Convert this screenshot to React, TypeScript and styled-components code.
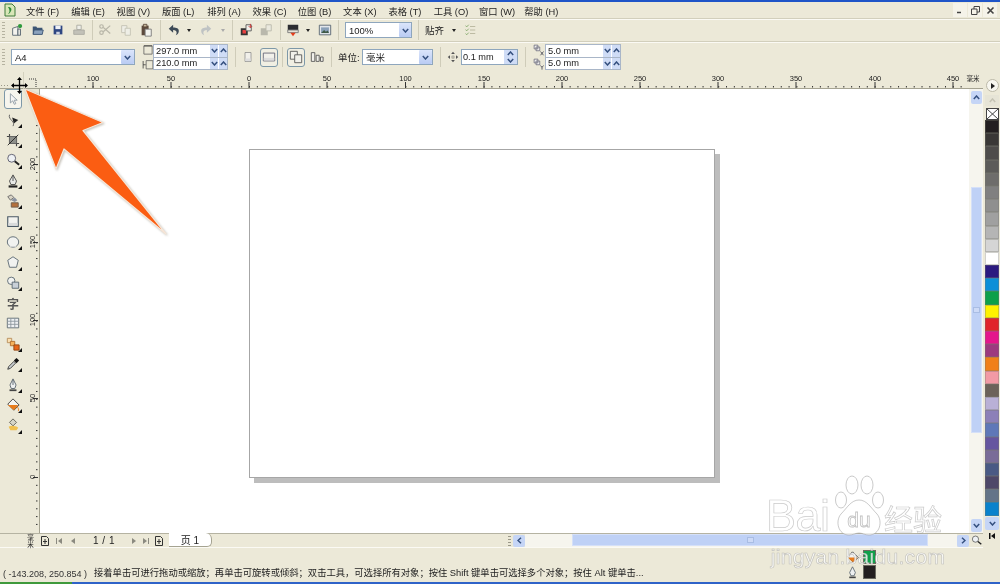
import React from "react";
import styled, { createGlobalStyle } from "styled-components";

const Global = createGlobalStyle`
  html, body { margin: 0; padding: 0; background: #ece9d8; }
  #root { width: 1000px; height: 584px; overflow: hidden; }
  * { box-sizing: border-box; }
`;

const FONT = `"Liberation Sans", "Noto Sans CJK SC", sans-serif`;
const FACE = "#ece9d8";

const Frame = styled.div`
  position: relative;
  width: 1000px;
  height: 584px;
  display: flex;
  flex-direction: column;
  background: ${FACE};
  font-family: ${FONT};
  font-size: 9.5px;
  color: #222;
  overflow: hidden;
  filter: blur(0.3px);
`;
const TopStrip = styled.div`height: 2px; background: #1f55c8; flex: none;`;
const MenuBar = styled.div`
  height: 17px; flex: none; display: flex; align-items: center; padding-left: 3px;
  border-bottom: 1px solid #d2cfbc; box-shadow: 0 1px 0 #fbfaf4;
`;
const AppIcon = styled.svg`width: 14px; height: 14px; margin-right: 9px; flex: none;`;
const MenuItem = styled.span`width: 45.3px; flex: none; white-space: nowrap; font-size: 9.3px; padding-top: 1px;`;
const WindowButtons = styled.div`margin-left: auto; display: flex; gap: 1px; padding-right: 3px;`;
const WindowButton = styled.span`
  width: 14px; height: 14px; background: #f5f3e9; display: flex; align-items: center; justify-content: center;
`;
const Bar = styled.div<{ $h: number; $line?: boolean }>`
  height: ${p => p.$h}px; flex: none; display: flex; align-items: center;
  ${p => p.$line ? "border-bottom: 1px solid #d2cfbc; box-shadow: 0 1px 0 #fbfaf4;" : ""}
`;
const Handle = styled.div`
  width: 3px; height: 16px; margin: 0 2px 0 2px; flex: none;
  background: repeating-linear-gradient(to bottom, #b5b2a0 0 1px, transparent 1px 3px);
`;
const Slot = styled.div<{ $w: number; $ml?: number }>`
  width: ${p => p.$w}px; margin-left: ${p => p.$ml ?? 0}px; height: 18px; flex: none;
  display: flex; align-items: center; justify-content: center;
`;
const ActiveSlot = styled(Slot)`
  height: 19px; border: 1.5px solid #7d98a8; border-radius: 3px; background: #f1efe3;
`;
const Sep = styled.div<{ $w: number }>`
  width: ${p => p.$w}px; height: 20px; flex: none; display: flex; justify-content: center;
  &::before { content: ""; width: 1px; height: 100%; background: #cfccb9; }
`;
const Caret = styled.div<{ $dim?: boolean }>`
  width: 0; height: 0; border-left: 2.5px solid transparent; border-right: 2.5px solid transparent;
  border-top: 3px solid ${p => p.$dim ? "#aaa" : "#222"};
`;
const Label = styled.span<{ $w: number; $ml?: number }>`
  width: ${p => p.$w}px; margin-left: ${p => p.$ml ?? 0}px; flex: none; white-space: nowrap; font-size: 9.5px;
`;
const SelectBox = styled.div<{ $w: number; $ml?: number }>`
  width: ${p => p.$w}px; height: 16px; margin-left: ${p => p.$ml ?? 0}px; flex: none;
  display: flex; align-items: center; background: #fff; border: 1px solid #8ea6bd;
  padding-left: 3px; font-size: 9.5px; position: relative;
`;
const Chevron = styled.span<{ $size?: number }>`
  display: flex; align-items: center; justify-content: center;
  width: ${p => p.$size ?? 12}px; height: 100%; margin-left: auto; flex: none;
  background: linear-gradient(#dbe5fb, #b9cbf3); border-radius: 1px;
`;
const SpinPair = styled.div<{ $w: number; $ml?: number }>`
  width: ${p => p.$w}px; margin-left: ${p => p.$ml ?? 0}px; height: 26px; flex: none;
  display: flex; flex-direction: column; border: 1px solid #a9b6c8; background: #fff;
`;
const SpinRow = styled.div`
  flex: 1; min-height: 0; display: flex; align-items: center; padding-left: 2px; font-size: 9.3px;
  & + & { border-top: 1px solid #a9b6c8; }
`;
const SpinButton = styled.span<{ $first?: boolean }>`
  width: 9px; height: 100%; flex: none; display: flex; align-items: center; justify-content: center;
  background: #cfdcf6; border-left: 1px solid #fff; margin-left: ${p => p.$first ? "auto" : "0"};
`;
const StackedIcons = styled.div<{ $w: number; $ml?: number }>`
  width: ${p => p.$w}px; margin-left: ${p => p.$ml ?? 0}px; flex: none; height: 26px;
  display: flex; flex-direction: column; align-items: center; justify-content: space-between;
`;
const SingleSpin = styled(SelectBox)`padding-left: 1px; font-size: 9.2px;`;
const VStackButton = styled.span`
  width: 13px; height: 100%; margin-left: auto; flex: none; display: flex; flex-direction: column;
  align-items: center; justify-content: space-evenly; background: #cfdcf6;
`;

const Workspace = styled.div`height: 475px; flex: none; display: flex;`;
const CenterColumn = styled.div`flex: none; width: 983px; display: flex; flex-direction: column;`;
const RulerBar = styled.div`height: 17px; flex: none; display: flex;`;
const MiddleRow = styled.div`height: 444px; flex: none; display: flex;`;
const Toolbox = styled.div`
  width: 24px; flex: none; display: flex; flex-direction: column; padding: 0 0 0 4px; 
`;
const Tool = styled.div<{ $active?: boolean; $fly?: boolean }>`
  position: relative; width: 18px; height: 20.4px; flex: none; display: flex; align-items: center; justify-content: center;
  ${p => p.$active ? "border: 1.5px solid #7d98a8; border-radius: 3px; background: #f6f5ee;" : ""}
  ${p => p.$fly ? `&::after { content: ""; position: absolute; right: 0; bottom: 2px; width: 0; height: 0;
    border-left: 4px solid transparent; border-bottom: 4px solid #111; }` : ""}
`;
const VRuler = styled.svg`width: 15px; height: 444px; flex: none; display: block;`;
const HRuler = styled.svg`width: 983px; height: 17px; display: block;`;
const CanvasArea = styled.div`
  flex: 1; min-width: 0; background: #fff; padding: 60px 0 0 209px; border-left: 1px solid #a5a391; 
`;
const Page = styled.div`
  width: 466px; height: 329px; background: #fff; border: 1px solid #a6a6a6; box-shadow: 5px 5px 0 #bdbdbd;
`;
const VScroll = styled.div`
  width: 14px; flex: none; background: #f6f5ee; display: flex; flex-direction: column; align-items: center; padding: 2px 0 1px;
`;
const ScrollButton = styled.div<{ $end?: boolean }>`
  width: 11px; height: 13px; flex: none; background: #c5d5f6; border-radius: 2px; display: flex; align-items: center; justify-content: center;
  margin-top: ${p => p.$end ? "auto" : "0"};
`;
const VThumb = styled.div`
  width: 11px; height: 246px; margin-top: 83px; background: #bfd1f6; border: 1px solid #d5e0f8; flex: none;
  display: flex; align-items: center; justify-content: center;
`;
const ThumbGrip = styled.span`
  width: 7px; height: 6px; flex: none; border: 1px solid #a9bde4; background: #cddaf7;
`;
const BottomRow = styled.div`
  height: 14px; flex: none; display: flex; align-items: center; 
  box-shadow: 0 1px 0 #fbfaf4; border-top: 1px solid #b5b3a2;
`;
const UnitCorner = styled.span`
  margin-left: 23px; flex: none; font-size: 6.5px; line-height: 7px; text-align: center; width: 15px;
`;
const NavIcon = styled.span<{ $w: number; $mt?: number }>`
  width: ${p => p.$w}px; margin-top: ${p => p.$mt ?? 0}px; flex: none; display: flex; align-items: center; justify-content: center;
`;
const PageCount = styled.span`width: 48px; text-align: center; font-size: 10px; flex: none; letter-spacing: .5px;`;
const PageTab = styled.div`
  width: 43px; height: 14px; margin-top: -1px; margin-left: 3px; background: #fff; flex: none;
  border-right: 1px solid #a5a391; border-bottom: 1px solid #a5a391; border-radius: 0 6px 5px 0;
  display: flex; align-items: center; justify-content: center; font-size: 10px;
`;
const GripDots = styled.span`
  width: 3px; height: 10px; margin-left: 296px; margin-right: 2px; flex: none;
  background: repeating-linear-gradient(to bottom, #9a9888 0 1px, transparent 1px 3px);
`;
const HTrack = styled.div`
  width: 432px; height: 13px; flex: none; background: #f6f5ee; padding-left: 47px; display: flex;
`;
const HThumb = styled.div`
  width: 356px; height: 12px; background: #bfd1f6; border: 1px solid #d5e0f8; display: flex; align-items: center; justify-content: center;
`;
const SmallButton = styled(ScrollButton)`width: 12px; height: 12px;`;
const Palette = styled.div`
  width: 17px; flex: none; display: flex; flex-direction: column; align-items: center; padding-top: 7px; padding-left: 1px;
`;
const PaletteFlyout = styled.div`
  width: 13px; height: 13px; border-radius: 50%; background: #f7f6ef; border: 1px solid #bcb9a8; flex: none;
  display: flex; align-items: center; justify-content: center;
`;
const PaletteUp = styled.div`
  width: 14px; height: 11px; margin-top: 3px; margin-bottom: 2px; background: #e6e4d6; flex: none; display: flex; align-items: center; justify-content: center;
`;
const NoColor = styled.svg`width: 13px; height: 12px; flex: none; display: block;`;
const Swatch = styled.div<{ $c: string }>`
  width: 14px; height: 13.2px; flex: none; background: ${p => p.$c}; border: 1px solid rgba(120,120,110,.35);
`;
const PaletteDown = styled(ScrollButton)`width: 14px; margin-top: 1px;`;
const StatusBar = styled.div`
  height: 35px; flex: none; display: flex; align-items: flex-end; padding: 0 0 3px 3px;
`;
const Coordinates = styled.span`width: 91px; flex: none; font-size: 9px; white-space: nowrap; color: #333;`;
const Hint = styled.span`width: 750px; flex: none; white-space: nowrap; font-size: 9.3px;`;
const ColorIndicators = styled.div`
  display: grid; grid-template-columns: 13px 13px; column-gap: 4px; row-gap: 1px; align-items: center; margin-left: 2px;
`;
const ColorChip = styled.div<{ $c: string }>`width: 13px; height: 14px; background: ${p => p.$c}; border: 1px solid #6a6a60;`;
const BottomStrip = styled.div`
  height: 2px; flex: none; background: linear-gradient(to right, #3f9a3c 0 72px, #2f63c8 72px);
`;
const ArrowOverlay = styled.svg`
  position: absolute; left: 20px; top: 84px; width: 155px; height: 160px; pointer-events: none;
`;
const CursorOverlay = styled.svg`position: absolute; left: 11px; top: 77px; width: 17px; height: 17px;`;
const Watermark = styled.div`
  position: absolute; left: 766px; top: 474px; width: 184px; height: 108px; pointer-events: none;
  display: flex; flex-direction: column; align-items: center; color: rgba(255,255,255,.8); font-family: "Liberation Sans", sans-serif;
  -webkit-text-stroke: 0.7px rgba(150,150,150,.5);
`;
const WatermarkTop = styled.div`display: flex; align-items: flex-end; height: 68px; width: 100%;`;
const WatermarkBai = styled.span`font-size: 45px; line-height: 52px; width: 66px; flex: none; letter-spacing: -.5px;`;
const WatermarkPaw = styled.svg`width: 56px; height: 68px; flex: none; margin-left: -1px;`;
const WatermarkCn = styled.span`font-family: "Noto Sans CJK SC", sans-serif; font-size: 29px; line-height: 48px; margin-left: -3px; white-space: nowrap;`;
const WatermarkUrl = styled.span`font-size: 21px; line-height: 24px; margin-top: 3px; white-space: nowrap; letter-spacing: .3px;`;
const ToolText = styled.span`font-size: 12px; color: #555; font-weight: 700;`;

const Ic = ({ children, s = 14 }: { children: React.ReactNode; s?: number }) => (
  <svg width={s} height={s} viewBox="0 0 16 16">{children}</svg>
);
const Chev = ({ up = false, c = "#35507f" }: { up?: boolean; c?: string }) => (
  <svg width="7" height="5" viewBox="0 0 7 5">
    <path d={up ? "M.8 4 3.5 1 6.2 4" : "M.8 1 3.5 4 6.2 1"} fill="none" stroke={c} strokeWidth="1.5" />
  </svg>
);
const ChevSide = ({ right = false }: { right?: boolean }) => (
  <svg width="5" height="7" viewBox="0 0 5 7">
    <path d={right ? "M1 .8 4 3.5 1 6.2" : "M4 .8 1 3.5 4 6.2"} fill="none" stroke="#35507f" strokeWidth="1.5" />
  </svg>
);
const Tri = ({ d, c = "#8b8a80" }: { d: string; c?: string }) => (
  <svg width="10" height="8" viewBox="0 0 10 8"><path d={d} fill={c} /></svg>
);
const PageAdd = () => (
  <svg width="10" height="10" viewBox="0 0 10 10"><path d="M1.500 .5h5l2 2v7h-7zM5 3v5M3 5.500h4" fill="none" stroke="#333" /></svg>
);

const icons = {
  newDoc: <Ic><path d="M3 6 9 4v10H3z" fill="#f4f3ee" stroke="#56636e" /><path d="M9 7h3v7H9z" fill="#dfe0dc" stroke="#56636e" /><circle cx="11.5" cy="3.5" r="2.4" fill="#2d9a3c" /></Ic>,
  open: <Ic><path d="M2 4h4l1 1.5h6V13H2z" fill="#3d5674" /><path d="M3.5 8H14l-1.2 5H2.5z" fill="#8ba2bd" stroke="#3d5674" /></Ic>,
  save: <Ic><path d="M3 3h10v10H3z" fill="#2e4682" /><path d="M5 3h6v4H5z" fill="#eef0f5" /><path d="M6 10h4v3H6z" fill="#cfd5e2" /></Ic>,
  print: <Ic><path d="M5.5 2.5h5v5h-5z" fill="#eeeee8" stroke="#a9a9a0" /><path d="M2 8h12v5H2z" fill="#c2c1b8" stroke="#a9a9a0" /></Ic>,
  cut: <Ic><path d="M14 3 6 10M14 12 6 5" stroke="#b8b6a8" strokeWidth="1.4" fill="none" /><circle cx="4" cy="4" r="2" fill="none" stroke="#b8b6a8" strokeWidth="1.4" /><circle cx="4" cy="11" r="2" fill="none" stroke="#b8b6a8" strokeWidth="1.4" /></Ic>,
  copy: <Ic><path d="M3 3h6v8H3z" fill="#eeeee6" stroke="#c4c2b4" /><path d="M7 6h6v8H7z" fill="#eeeee6" stroke="#c4c2b4" /></Ic>,
  paste: <Ic><path d="M3 3h8v11H3z" fill="#5d4a3c" /><path d="M5 1.5h4v3H5z" fill="#c8b89c" stroke="#5d4a3c" /><path d="M7 7h7v8H7z" fill="#f3f3ee" stroke="#777" /></Ic>,
  undo: <Ic><path d="M7 2 2 6.5 7 11V8c2.5 0 4 1 4 3.2 0 1-.4 2-.9 2.8 2.3-1.2 3.4-3 3.4-5C13.5 6 11 5 7 5z" fill="#3d4a57" /></Ic>,
  redo: <Ic><path d="M9 2l5 4.5L9 11V8C6.5 8 5 9 5 11.2c0 1 .4 2 .9 2.8C3.600 12.800 2.500 11 2.500 9 2.500 6 5 5 9 5z" fill="#bfc3c4" /></Ic>,
  importIc: <Ic><path d="M2 6h8v8H2z" fill="#333" /><path d="M4 8h4v4H4z" fill="#e84040" /><path d="M8 2h6v7H8z" fill="#f0f0ea" stroke="#555" /><path d="M13 1v4M11 3.500l2 2 2-2" stroke="#c33" fill="none" /></Ic>,
  exportIc: <Ic><path d="M2 6h8v8H2z" fill="#b9b8ac" /><path d="M8 2h6v7H8z" fill="#e9e8de" stroke="#b9b8ac" /></Ic>,
  launcher: <Ic><path d="M2 2h12v6H2z" fill="#2c2c30" /><path d="M2 8h12v3H2z" fill="#e6e4d8" stroke="#777" /><path d="M5 11h6l-3 4z" fill="#e43e1c" /></Ic>,
  online: <Ic><path d="M1.500 2.500h13v11h-13z" fill="#e3e6ea" stroke="#55626e" /><path d="M3.500 5h9v6.500h-9z" fill="#8aa0b8" /><path d="M3.500 11.500 7 8l2 2 2-1.500 1.500 3z" fill="#3f5a46" /></Ic>,
  snap: <Ic><path d="M3 3l1.200 1.500L6.500 2M3 7.500l1.200 1.500L6.500 6.500M3 12l1.200 1.500L6.500 11" stroke="#82a86a" fill="none" /><path d="M8 4h6M8 8h6M8 12h6" stroke="#b6b39c" /></Ic>,
  pageH: <Ic s={12}><path d="M2.500 2.500h11v11h-11z" fill="none" stroke="#555" /><path d="M2.500 2.500h11" stroke="#333" strokeWidth="1" /></Ic>,
  pageV: <Ic s={12}><path d="M1.500 4v10M1.500 9H5" stroke="#333" /><path d="M5.500 3.500h9v11h-9z" fill="none" stroke="#555" /></Ic>,
  portrait: <Ic><path d="M4 2h8v12H4z" fill="#f1f0ea" stroke="#888" /><path d="M4.500 10h7v3.500h-7z" fill="#ddd" /></Ic>,
  landscape: <Ic><path d="M1.500 3.500h13v9h-13z" fill="#f1f0ea" stroke="#667" /><path d="M2 9h12v3H2z" fill="#ddd" /></Ic>,
  pagesAll: <Ic><path d="M1.500 1.500h8v9h-8z" fill="#f1f0ea" stroke="#555" /><path d="M6.500 5.500h8v9h-8z" fill="#f1f0ea" stroke="#555" /></Ic>,
  pagesCur: <Ic><path d="M1.500 3h4v10h-4z M7 6h3.500v7H7z M12 8h3v5h-3z" fill="#f1f0ea" stroke="#555" /></Ic>,
  nudge: <Ic><path d="M8 1 10.500 4h-5zM8 15l2.500-3h-5zM1 8l3-2.500v5zM15 8l-3-2.500v5z" fill="#555" /><circle cx="8" cy="8" r="2.500" fill="#b8b6a8" /></Ic>,
  dupX: <Ic s={12}><path d="M1.500 1.500h5v5h-5zM4 4h5v5H4z" fill="#eee" stroke="#667" /><path d="M10 10l4 5M14 10l-4 5" stroke="#334" /></Ic>,
  dupY: <Ic s={12}><path d="M1.500 1.500h5v5h-5zM4 4h5v5H4z" fill="#eee" stroke="#667" /><path d="M10 10l2 2.500 2-2.500M12 12.500V15.500" stroke="#334" fill="none" /></Ic>,
  pick: <Ic><path d="M5 2v10.500l2.700-2.400 1.800 4 1.700-.8-1.800-3.900h3.400z" fill="#f5f5f5" stroke="#8d99a2" /></Ic>,
  shape: <Ic><path d="M4 2c-1 3 1 5 3 7s2 4 1 6" fill="none" stroke="#555" /><path d="M7 5l7 3-5 4z" fill="#222" /></Ic>,
  crop: <Ic><path d="M4 1v11h11M1 4h11v11" fill="none" stroke="#444" strokeWidth="1.300" /><path d="M4 4h8v8H4z" fill="#8d8f8a" /><path d="M2 14 14 2" stroke="#222" /></Ic>,
  zoom: <Ic><circle cx="6.500" cy="6" r="4.500" fill="#eef1f4" stroke="#556" /><path d="M10 9.500l5 4" stroke="#222" strokeWidth="2.200" /></Ic>,
  pen: <Ic><path d="M8 1 12 8l-1.500 4h-5L4 8z" fill="#e8e9e6" stroke="#444" /><path d="M8 2v6" stroke="#444" /><path d="M3 13h10v2.500H3z" fill="#222" /></Ic>,
  smart: <Ic><path d="M2 3l4-2 3 3-4 3z" fill="#d9d4c6" stroke="#666" /><path d="M6 7l4-3 3 3-3 2z" fill="#8a92a0" /><path d="M6 10h8v5H6z" fill="#b4703c" stroke="#6a5a4c" /></Ic>,
  rect: <Ic><path d="M2 2h12v11H2z" fill="#f3f3ef" stroke="#4b5a66" strokeWidth="1.300" /><path d="M2.700 9h10.600v3.300H2.700z" fill="#d9dbdb" /></Ic>,
  ellipse: <Ic><ellipse cx="8" cy="8" rx="6.500" ry="6" fill="#f1f2f0" stroke="#56646e" /><path d="M3 11c3 2.500 7 2.500 10 0l-2 3H5z" fill="#d6d8d8" /></Ic>,
  polygon: <Ic><path d="M8 2l6 4-2 8H4L2 6z" fill="#f1f2f0" stroke="#56646e" /></Ic>,
  basic: <Ic><circle cx="6" cy="5.500" r="4.200" fill="#f1f2f0" stroke="#56646e" /><path d="M7 7h7.500v7H7z" fill="#c9d0d8" stroke="#56646e" /></Ic>,
  table: <Ic><path d="M1.500 2.500h13v11h-13z" fill="#eef0f2" stroke="#5c6870" /><path d="M1.500 6h13M1.500 9.500h13M5.500 2.500v11M10 2.500v11" stroke="#8d979e" fill="none" /></Ic>,
  blend: <Ic><path d="M1.500 1.500h5v5h-5z" fill="#fbe0b2" stroke="#b58c58" /><path d="M5 5h5v5H5z" fill="#f5b25c" stroke="#b06a28" /><path d="M9 9h6v6H9z" fill="#e8661a" stroke="#90420c" /></Ic>,
  dropper: <Ic><path d="M2 14l1-3 6-6 2 2-6 6z" fill="#c9ced0" stroke="#333" /><path d="M9 4l3-3 3 3-3 3z" fill="#111" /></Ic>,
  outline: <Ic><path d="M8 1l3.500 7L10 12H6L4.500 8z" fill="#eef0f0" stroke="#55606a" /><path d="M8 2v6" stroke="#55606a" /><path d="M4 13h8v2H4z" fill="#444" /></Ic>,
  fill: <Ic><path d="M8 1 15 8l-6 6-7-7z" fill="#f4f4f0" stroke="#333" /><path d="M2 8h12l-5 6z" fill="#e87c1c" /><path d="M13 10c1 2 2 3 1 5" stroke="#e87c1c" fill="none" /></Ic>,
  ifill: <Ic><path d="M8 1l4 4-4 4-4-4z" fill="#d6d5c8" stroke="#5c5c52" /><path d="M3 10c3-2 8-1 11 1l-2 3H5z" fill="#f0c050" /></Ic>,
};

const menuItems = ["文件 (F)", "编辑 (E)", "视图 (V)", "版面 (L)", "排列 (A)", "效果 (C)", "位图 (B)", "文本 (X)", "表格 (T)", "工具 (O)", "窗口 (W)", "帮助 (H)"];
const swatches = ["#231f20","#3a3836","#4e4c4a","#5c5b59","#6e6d6b","#808080","#8f8f8f","#a0a0a0","#b5b5b5","#d5d5d5","#ffffff","#2b1a80","#0b8fd8","#0ea04a","#fff200","#e0242a","#e4168c","#9c3a7f","#f08019","#f29aa5","#6c625a","#b9b0d6","#8c80b8","#5f78b8","#6656a0","#7a6c98","#4a5a84","#4e4868","#647488","#0a82cc"];
const tools: { k: keyof typeof icons; fly?: boolean; active?: boolean; text?: string }[] = [
  { k: "pick", active: true }, { k: "shape", fly: true }, { k: "crop", fly: true }, { k: "zoom", fly: true },
  { k: "pen", fly: true }, { k: "smart", fly: true }, { k: "rect", fly: true }, { k: "ellipse", fly: true },
  { k: "polygon", fly: true }, { k: "basic", fly: true }, { k: "pick", text: "字" }, { k: "table" },
  { k: "blend", fly: true }, { k: "dropper", fly: true }, { k: "outline", fly: true }, { k: "fill", fly: true }, { k: "ifill", fly: true },
];

const hLabels = [[93,"100"],[171,"50"],[249,"0"],[327,"50"],[405.5,"100"],[484,"150"],[562,"200"],[640,"250"],[718,"300"],[796,"350"],[875,"400"],[953,"450"]] as [number,string][];
const vLabels = [[164,"200"],[242,"150"],[320,"100"],[398,"50"],[477,"0"]] as [number,string][];
const STEP = 78.2 / 10;
const hDots = Array.from({ length: 125 }, (_, i) => 249 + (i - 28) * STEP).filter(x => x > 38 && x < 968);
const vDots = Array.from({ length: 60 }, (_, i) => 477 - (i - 8) * STEP).filter(y => y > 92 && y < 530);

export default function App() {
  return (
    <Frame>
      <Global />
      <TopStrip />
      <MenuBar>
        <AppIcon viewBox="0 0 14 14">
          <path d="M2 1h7l3 3v9H2z" fill="#d8e6b8" stroke="#3f7a3a" />
          <path d="M5 4c3 0 4 2 3 4s-2 3-3 3c2-2 2-4 0-7z" fill="#2f8a3a" />
        </AppIcon>
        {menuItems.map(m => <MenuItem key={m}>{m}</MenuItem>)}
        <WindowButtons>
          <WindowButton><svg width="8" height="8" viewBox="0 0 8 8"><path d="M1 6.500h4" stroke="#444" strokeWidth="1.500" /></svg></WindowButton>
          <WindowButton><svg width="9" height="9" viewBox="0 0 9 9"><path d="M.5 3h5.500v5.500H.5zM3 3V.5h5.500V6H6" fill="none" stroke="#444" /></svg></WindowButton>
          <WindowButton><svg width="9" height="9" viewBox="0 0 9 9"><path d="M1.500 1.500l6 6M7.500 1.500l-6 6" stroke="#444" strokeWidth="1.600" /></svg></WindowButton>
        </WindowButtons>
      </MenuBar>
      <Bar $h={23} $line>
        <Handle />
        <Slot $w={20.5}>{icons.newDoc}</Slot>
        <Slot $w={20.5}>{icons.open}</Slot>
        <Slot $w={20.5}>{icons.save}</Slot>
        <Slot $w={20.5}>{icons.print}</Slot>
        <Sep $w={6} />
        <Slot $w={20.5}>{icons.cut}</Slot>
        <Slot $w={20.5}>{icons.copy}</Slot>
        <Slot $w={20.5}>{icons.paste}</Slot>
        <Sep $w={7} />
        <Slot $w={20}>{icons.undo}</Slot>
        <Slot $w={10}><Caret /></Slot>
        <Slot $w={25}>{icons.redo}</Slot>
        <Slot $w={8}><Caret $dim /></Slot>
        <Sep $w={11} />
        <Slot $w={16}>{icons.importIc}</Slot>
        <Slot $w={25}>{icons.exportIc}</Slot>
        <Sep $w={4} />
        <Slot $w={21}>{icons.launcher}</Slot>
        <Slot $w={9}><Caret /></Slot>
        <Slot $w={25}>{icons.online}</Slot>
        <Sep $w={2} />
        <SelectBox $w={67} $ml={5.5}>100%<Chevron><Chev /></Chevron></SelectBox>
        <Sep $w={13} />
        <Label $w={22}>贴齐</Label>
        <Slot $w={14}><Caret /></Slot>
        <Slot $w={18}>{icons.snap}</Slot>
      </Bar>
      <Bar $h={30}>
        <Handle />
        <SelectBox $w={124} $ml={4}>A4<Chevron $size={13}><Chev /></Chevron></SelectBox>
        <StackedIcons $w={11} $ml={7}>{icons.pageH}{icons.pageV}</StackedIcons>
        <SpinPair $w={75}>
          <SpinRow>297.0 mm<SpinButton $first><Chev /></SpinButton><SpinButton><Chev up /></SpinButton></SpinRow>
          <SpinRow>210.0 mm<SpinButton $first><Chev /></SpinButton><SpinButton><Chev up /></SpinButton></SpinRow>
        </SpinPair>
        <Sep $w={14} />
        <Slot $w={12}>{icons.portrait}</Slot>
        <ActiveSlot $w={18} $ml={6}>{icons.landscape}</ActiveSlot>
        <Sep $w={9} />
        <ActiveSlot $w={18}>{icons.pagesAll}</ActiveSlot>
        <Slot $w={18} $ml={3}>{icons.pagesCur}</Slot>
        <Sep $w={10} />
        <Label $w={24} $ml={2}>单位:</Label>
        <SelectBox $w={71}>毫米<Chevron $size={13}><Chev /></Chevron></SelectBox>
        <Sep $w={14} />
        <Slot $w={12}>{icons.nudge}</Slot>
        <SingleSpin $w={57} $ml={2}>0.1 mm
          <VStackButton><Chev up /><Chev /></VStackButton>
        </SingleSpin>
        <Sep $w={14} />
        <StackedIcons $w={13}>{icons.dupX}{icons.dupY}</StackedIcons>
        <SpinPair $w={76}>
          <SpinRow>5.0 mm<SpinButton $first><Chev /></SpinButton><SpinButton><Chev up /></SpinButton></SpinRow>
          <SpinRow>5.0 mm<SpinButton $first><Chev /></SpinButton><SpinButton><Chev up /></SpinButton></SpinRow>
        </SpinPair>
      </Bar>
      <Workspace>
        <CenterColumn>
          <RulerBar>
            <HRuler viewBox="0 0 983 17">
              <path d="M0 16.500H983" stroke="#a5a391" />
              <path d="M23.500 0V17" stroke="#d4d1be" />
              <path d="M1 13.500h8" stroke="#9a9888" strokeDasharray="1 2" />
              {hDots.map(x => <rect key={x} x={x} y={14} width={1} height={1.5} fill="#333" />)}
              {hLabels.map(([x, t]) => (
                <g key={x}>
                  <path d={`M${x} 10V16`} stroke="#333" />
                  <text x={x} y={9} fontSize="7.5" textAnchor="middle" fontFamily="Liberation Sans" fill="#222">{t}</text>
                </g>
              ))}
              <text x={973} y={9} fontSize="6.5" textAnchor="middle" fontFamily="Noto Sans CJK SC" fill="#222">毫米</text>
              <path d="M29 7h7v9" fill="none" stroke="#333" strokeDasharray="1 1" />
            </HRuler>
          </RulerBar>
          <MiddleRow>
            <Toolbox>
              {tools.map((t, i) => (
                <Tool key={i} $active={t.active} $fly={t.fly}>
                  {t.text ? <ToolText>{t.text}</ToolText> : icons[t.k]}
                </Tool>
              ))}
            </Toolbox>
            <VRuler viewBox="0 0 15 444">
              {vDots.map(y => <rect key={y} x={12} y={y - 89} width={1.5} height={1} fill="#333" />)}
              {vLabels.map(([y, t]) => (
                <g key={y}>
                  <path d={`M9 ${y - 88.5}H14`} stroke="#333" />
                  <text transform={`translate(10.5 ${y - 89}) rotate(-90)`} fontSize="7.5" textAnchor="middle" fontFamily="Liberation Sans" fill="#222">{t}</text>
                </g>
              ))}
            </VRuler>
            <CanvasArea><Page /></CanvasArea>
            <VScroll>
              <ScrollButton><Chev up /></ScrollButton>
              <VThumb><ThumbGrip /></VThumb>
              <ScrollButton $end><Chev /></ScrollButton>
            </VScroll>
          </MiddleRow>
          <BottomRow>
            <UnitCorner>毫<br />米</UnitCorner>
            <NavIcon $w={14}><PageAdd /></NavIcon>
            <NavIcon $w={14}><Tri d="M2 1h1v6H2zM8 1v6L4 4z" /></NavIcon>
            <NavIcon $w={14}><Tri d="M7 1v6L3 4z" /></NavIcon>
            <PageCount>1 / 1</PageCount>
            <NavIcon $w={12}><Tri d="M3 1v6l4-3z" /></NavIcon>
            <NavIcon $w={12}><Tri d="M2 1v6l4-3zM7 1h1v6H7z" /></NavIcon>
            <NavIcon $w={14}><PageAdd /></NavIcon>
            <PageTab>页 1</PageTab>
            <GripDots />
            <SmallButton><ChevSide /></SmallButton>
            <HTrack><HThumb><ThumbGrip /></HThumb></HTrack>
            <SmallButton><ChevSide right /></SmallButton>
            <NavIcon $w={14}><Ic s={11}><circle cx="6.500" cy="6" r="4.500" fill="#eef1f4" stroke="#444" /><path d="M10 9.500l5 4" stroke="#222" strokeWidth="2" /></Ic></NavIcon>
          </BottomRow>
        </CenterColumn>
        <Palette>
          <PaletteFlyout><svg width="5" height="6" viewBox="0 0 5 6"><path d="M1 0l4 3-4 3z" fill="#222" /></svg></PaletteFlyout>
          <PaletteUp><Chev up c="#c5c3b4" /></PaletteUp>
          <NoColor viewBox="0 0 13 12"><rect x=".5" y=".5" width="12" height="11" fill="#fff" stroke="#444" /><path d="M1 1l11 10M12 1 1 11" stroke="#444" /></NoColor>
          {swatches.map((c, i) => <Swatch key={i} $c={c} />)}
          <PaletteDown><Chev /></PaletteDown>
          <NavIcon $w={14} $mt={2}><Tri d="M2 1h1.500v6H2zM8 1v6L4 4z" c="#111" /></NavIcon>
        </Palette>
      </Workspace>
      <StatusBar>
        <Coordinates>( -143.208, 250.854 )</Coordinates>
        <Hint>接着单击可进行拖动或缩放；再单击可旋转或倾斜；双击工具，可选择所有对象；按住 Shift 键单击可选择多个对象；按住 Alt 键单击...</Hint>
        <ColorIndicators>
          <Ic s={13}><path d="M8 1 15 8l-6 6-7-7z" fill="#f4f4f0" stroke="#333" /><path d="M2 8h12l-5 6z" fill="#e87c1c" /></Ic>
          <ColorChip $c="#0ea04a" />
          <Ic s={13}><path d="M8 1l3.500 7L10 12H6L4.500 8z" fill="#eef0f0" stroke="#55606a" /><path d="M4 13h8v2H4z" fill="#444" /></Ic>
          <ColorChip $c="#231f20" />
        </ColorIndicators>
      </StatusBar>
      <BottomStrip />
      <ArrowOverlay viewBox="20 84 155 160">
        <path d="M25 89 103 122.500 83 130.500 166 234 64 149 56 169z" fill="#fb5d12" stroke="#f6e6d8" strokeWidth="1.200" strokeLinejoin="round" style={{ filter: "drop-shadow(1px 1px 1px rgba(120,110,90,.45))" }} />
      </ArrowOverlay>
      <CursorOverlay viewBox="0 0 17 17">
        <path d="M8.500 1v15M1 8.500h15" stroke="#000" strokeWidth="1.300" />
        <path d="M8.500 0 11 3H6zM8.500 17 11 14H6zM0 8.500 3 6v5zM17 8.500 14 6v5z" fill="#000" />
      </CursorOverlay>
      <Watermark>
        <WatermarkTop>
          <WatermarkBai>Bai</WatermarkBai>
          <WatermarkPaw viewBox="0 0 56 68">
            <g fill="rgba(255,255,255,.75)" stroke="rgba(150,150,150,.5)" strokeWidth="1">
              <ellipse cx="10" cy="26" rx="5.500" ry="8" />
              <ellipse cx="21" cy="11" rx="6" ry="9" />
              <ellipse cx="36" cy="11" rx="6" ry="9" />
              <ellipse cx="47" cy="26" rx="5.500" ry="8" />
              <path d="M28 26c8 0 12 8 18 14 6 7 3 21-8 21-4 0-7-2-10-2s-6 2-10 2C7 61 4 47 10 40c6-6 10-14 18-14z" />
            </g>
            <text x="28" y="53" textAnchor="middle" fontSize="21" fontFamily="Liberation Sans" fill="rgba(255,255,255,.8)" stroke="rgba(150,150,150,.6)" strokeWidth=".8">du</text>
          </WatermarkPaw>
          <WatermarkCn>经验</WatermarkCn>
        </WatermarkTop>
        <WatermarkUrl>jingyan.baidu.com</WatermarkUrl>
      </Watermark>
    </Frame>
  );
}
